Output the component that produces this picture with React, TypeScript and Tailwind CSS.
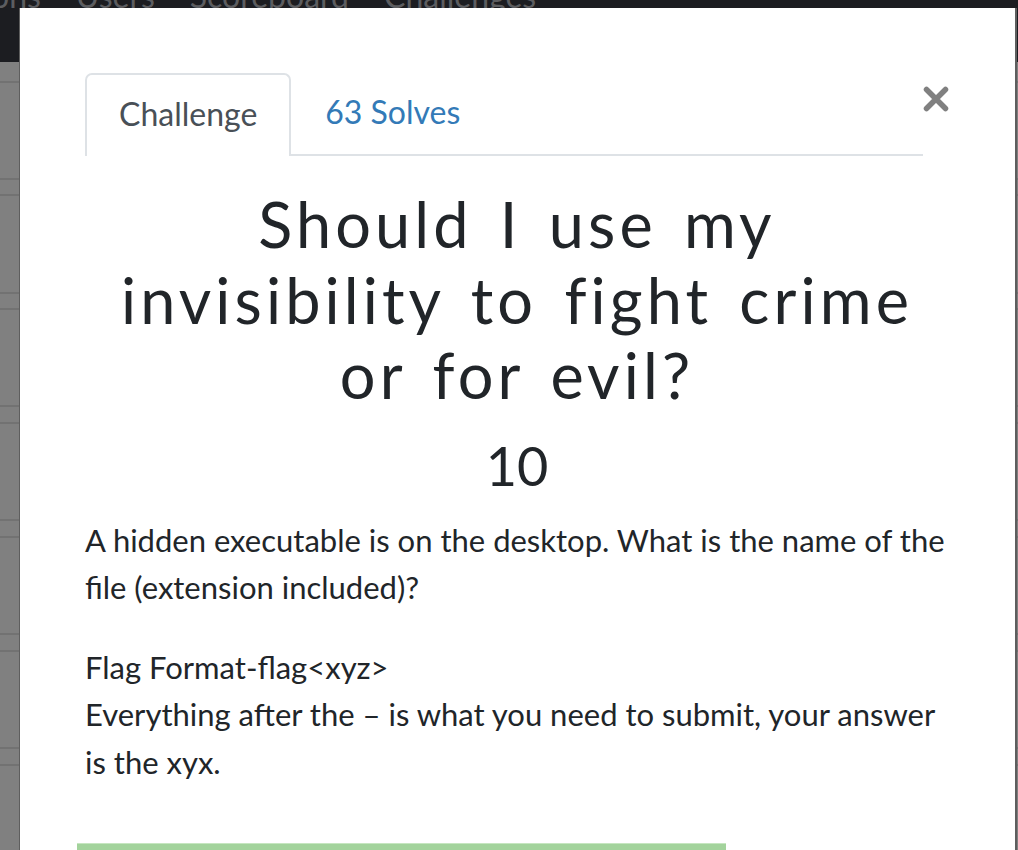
import React from 'react'

const navItems = ['ons', 'Users', 'Scoreboard', 'Challenges']

// heights of the table rows behind the backdrop (each ends with a line)
const rowHeights = [21, 97, 16, 98, 16, 97, 17, 97, 17, 97, 17, 97, 17, 97, 17]

function CloseIcon() {
  return (
    <svg width="26" height="26" viewBox="0 0 26 26" className="block">
      <path d="M3.5 3.5 L22.5 22.5 M22.5 3.5 L3.5 22.5" stroke="#808080" strokeWidth="5.5" strokeLinecap="round" />
    </svg>
  )
}

export default function App() {
  return (
    <div className="relative w-[1018px] h-[850px] overflow-hidden bg-[#808080] font-['Lato','Liberation_Sans',sans-serif]">
      {/* page behind the modal */}
      <div className="h-[62px] bg-[#1c1d21] flex items-end overflow-hidden">
        <div className="flex gap-[35px] -ml-[9px] translate-y-[-44px]">
          {navItems.map((n) => (
            <span key={n} className="text-[32px] leading-[44px] text-[#5c5d60] whitespace-nowrap">
              {n}
            </span>
          ))}
        </div>
      </div>
      <div>
        {rowHeights.map((h, i) => (
          <div key={i} style={{ height: h }} className="border-b-2 border-[#727272]" />
        ))}
      </div>

      {/* modal */}
      <div className="absolute left-[19px] top-[8px] w-[998px] h-[900px] bg-white border-l border-r-2 border-[#5e5e5e]">
        <div className="pl-[65px] pr-[66px] pt-[65px] text-[#212529]">
          <div className="flex items-start">
            <div className="flex-1 flex border-b-2 border-[#dee2e6]">
              <div className="-mb-[2px] bg-white border-2 border-b-0 border-[#dee2e6] rounded-t-[7px] px-[32px] pt-[17px] pb-[20px] text-[32px] leading-[44px] text-[#495057]">
                Challenge
              </div>
              <div className="px-[34px] pt-[17px] pb-[20px] text-[32px] leading-[44px] text-[#337ab7]">
                63 Solves
              </div>
            </div>
            <div className="mt-[13px] shrink-0">
              <CloseIcon />
            </div>
          </div>

          <h1 className="mt-[30px] text-center text-[63px] leading-[75.5px] font-normal tracking-[0.065em] [word-spacing:7px] text-[#212529]">
            Should I use my
            <br />
            invisibility to fight crime
            <br />
            or for evil?
          </h1>
          <h4 className="mt-[20px] text-center text-[54px] leading-[65px] font-normal">10</h4>

          <div className="mt-[19px] text-[31px] leading-[47.5px]">
            <p>A hidden executable is on the desktop. What is the name of the file (extension included)?</p>
            <p className="mt-[32px]">
              Flag Format-flag&lt;xyz&gt;
              <br />
              Everything after the – is what you need to submit, your answer is the xyx.
            </p>
          </div>

          <div className="mt-[57px] -ml-[8px] w-[649px] h-[40px] border-t border-[#c6e6c0] bg-[#a3d39c]" />
        </div>
      </div>
    </div>
  )
}
